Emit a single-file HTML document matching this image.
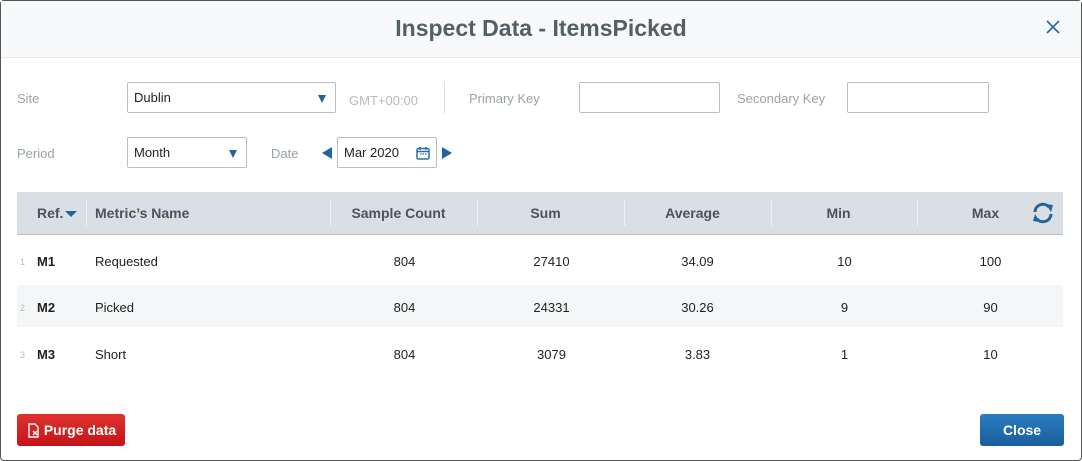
<!DOCTYPE html>
<html><head><style>
*{box-sizing:border-box;margin:0;padding:0}
body{width:1082px;height:461px;background:#fff;font-family:"Liberation Sans",sans-serif;position:relative;overflow:hidden}
.frame{position:absolute;left:0;top:0;width:1082px;height:461px;border:1px solid #555;border-radius:4px;background:#fff}
.hdr{position:absolute;left:1px;top:1px;right:1px;height:57px;background:#f7f9fa;border-bottom:1px solid #e8ecee}
.title{position:absolute;left:0;right:0;top:14px;text-align:center;font-size:23px;font-weight:bold;color:#555f66}
.x{position:absolute;left:1044px;top:18px}
.lbl{position:absolute;font-size:13px;color:#9aa3a9}
.in{position:absolute;border:1px solid #b9bec2;border-radius:2px;background:#fff;font-size:13px;color:#222;padding-left:6px;line-height:29px;height:31px}
.tri{position:absolute;right:9px;top:11px;width:0;height:0;border-left:4px solid transparent;border-right:4px solid transparent;border-top:8px solid #2064a0}
.th{position:absolute;left:17px;top:192px;width:1046px;height:43px;background:#d9dfe3;border-bottom:1px solid #b8c0c5}
.th div{position:absolute;top:0;line-height:42px;font-size:14px;font-weight:bold;color:#4a545a}
.sep{position:absolute;top:8px;width:1px;height:26px;background:#eef1f3}
.row{position:absolute;left:17px;width:1046px;height:42px;font-size:13px;color:#222}
.row div{position:absolute;top:0;line-height:42px}
.n{font-size:9px;color:#bbb;left:3px}
.r{left:20px;font-weight:bold}
.c{width:147px;text-align:center}
.btn{position:absolute;top:414px;height:32px;border-radius:3px;color:#fff;font-weight:bold;font-size:14px;line-height:32px;text-align:center}
</style></head><body>
<div class="frame"></div>
<div class="hdr"><div class="title">Inspect Data - ItemsPicked</div>
<svg class="x" width="16" height="16" viewBox="0 0 16 16"><path d="M2 2L14 14M14 2L2 14" stroke="#2b6ea5" stroke-width="1.8"/></svg></div>

<div class="lbl" style="left:17px;top:91px">Site</div>
<div class="in" style="left:127px;top:82px;width:209px">Dublin<span class="tri" style="top:12px"></span></div>
<div class="lbl" style="left:349px;top:93px;color:#b5bcc1">GMT+00:00</div>
<div style="position:absolute;left:444px;top:82px;width:1px;height:32px;background:#dde1e4"></div>
<div class="lbl" style="left:469px;top:91px">Primary Key</div>
<div class="in" style="left:579px;top:82px;width:141px"></div>
<div class="lbl" style="left:737px;top:91px">Secondary Key</div>
<div class="in" style="left:847px;top:82px;width:142px"></div>

<div class="lbl" style="left:17px;top:146px">Period</div>
<div class="in" style="left:127px;top:137px;width:120px">Month<span class="tri" style="top:12px"></span></div>
<div class="lbl" style="left:271px;top:146px">Date</div>
<div style="position:absolute;left:322px;top:147px;border-top:6px solid transparent;border-bottom:6px solid transparent;border-right:10px solid #2064a0"></div>
<div class="in" style="left:337px;top:137px;width:100px">Mar 2020
<svg style="position:absolute;left:78px;top:8px" width="14" height="14" viewBox="0 0 14 14"><rect x="1" y="2.5" width="12" height="10.5" rx="1.5" fill="none" stroke="#2b6ea5" stroke-width="1.5"/><path d="M1 5.5H13M4 1V4M10 1V4" stroke="#2b6ea5" stroke-width="1.5"/><path d="M4 8h1.5M6.5 8H8M9 8h1.5" stroke="#2b6ea5" stroke-width="1.3"/></svg></div>
<div style="position:absolute;left:442px;top:147px;border-top:6px solid transparent;border-bottom:6px solid transparent;border-left:10px solid #2064a0"></div>

<div class="th">
<div style="left:20px">Ref.</div>
<span style="position:absolute;left:48px;top:19px;border-left:6px solid transparent;border-right:6px solid transparent;border-top:6px solid #2064a0"></span>
<span class="sep" style="left:69px"></span>
<div style="left:78px">Metric’s Name</div>
<span class="sep" style="left:313px"></span>
<div class="c" style="left:308px">Sample Count</div>
<span class="sep" style="left:460px"></span>
<div class="c" style="left:455px">Sum</div>
<span class="sep" style="left:607px"></span>
<div class="c" style="left:602px">Average</div>
<span class="sep" style="left:754px"></span>
<div class="c" style="left:748px">Min</div>
<span class="sep" style="left:900px"></span>
<div class="c" style="left:895px">Max</div>
<svg style="position:absolute;left:1013px;top:8px" width="26" height="26" viewBox="0 0 26 26"><path d="M5 12A8 8 0 0 1 19 7" fill="none" stroke="#2064a0" stroke-width="3"/><path d="M16 4L23 5L21 12Z" fill="#2064a0"/><path d="M21 14A8 8 0 0 1 7 19" fill="none" stroke="#2064a0" stroke-width="3"/><path d="M10 22L3 21L5 14Z" fill="#2064a0"/></svg>
</div>

<div class="row" style="top:241px"><div class="n">1</div><div class="r">M1</div><div style="left:78px">Requested</div><div class="c" style="left:314px">804</div><div class="c" style="left:461px">27410</div><div class="c" style="left:607px">34.09</div><div class="c" style="left:754px">10</div><div class="c" style="left:900px">100</div></div>
<div style="position:absolute;left:17px;top:285px;width:1046px;height:42px;background:#f4f6f7"></div>
<div class="row" style="top:287px"><div class="n">2</div><div class="r">M2</div><div style="left:78px">Picked</div><div class="c" style="left:314px">804</div><div class="c" style="left:461px">24331</div><div class="c" style="left:607px">30.26</div><div class="c" style="left:754px">9</div><div class="c" style="left:900px">90</div></div>
<div class="row" style="top:334px"><div class="n">3</div><div class="r">M3</div><div style="left:78px">Short</div><div class="c" style="left:314px">804</div><div class="c" style="left:461px">3079</div><div class="c" style="left:607px">3.83</div><div class="c" style="left:754px">1</div><div class="c" style="left:900px">10</div></div>

<div class="btn" style="left:17px;width:108px;background:linear-gradient(#e0332e,#c4121a);padding-left:18px">Purge data
<svg style="position:absolute;left:11px;top:9px" width="12" height="15" viewBox="0 0 12 15"><path d="M1 1H7L10 4V14H1Z" fill="none" stroke="#fff" stroke-width="1.4"/><path d="M5 8L9 12M9 8L5 12" stroke="#fff" stroke-width="1.3"/></svg></div>
<div class="btn" style="left:980px;width:84px;background:linear-gradient(#2a7cc0,#1a5e9e)">Close</div>
</body></html>
